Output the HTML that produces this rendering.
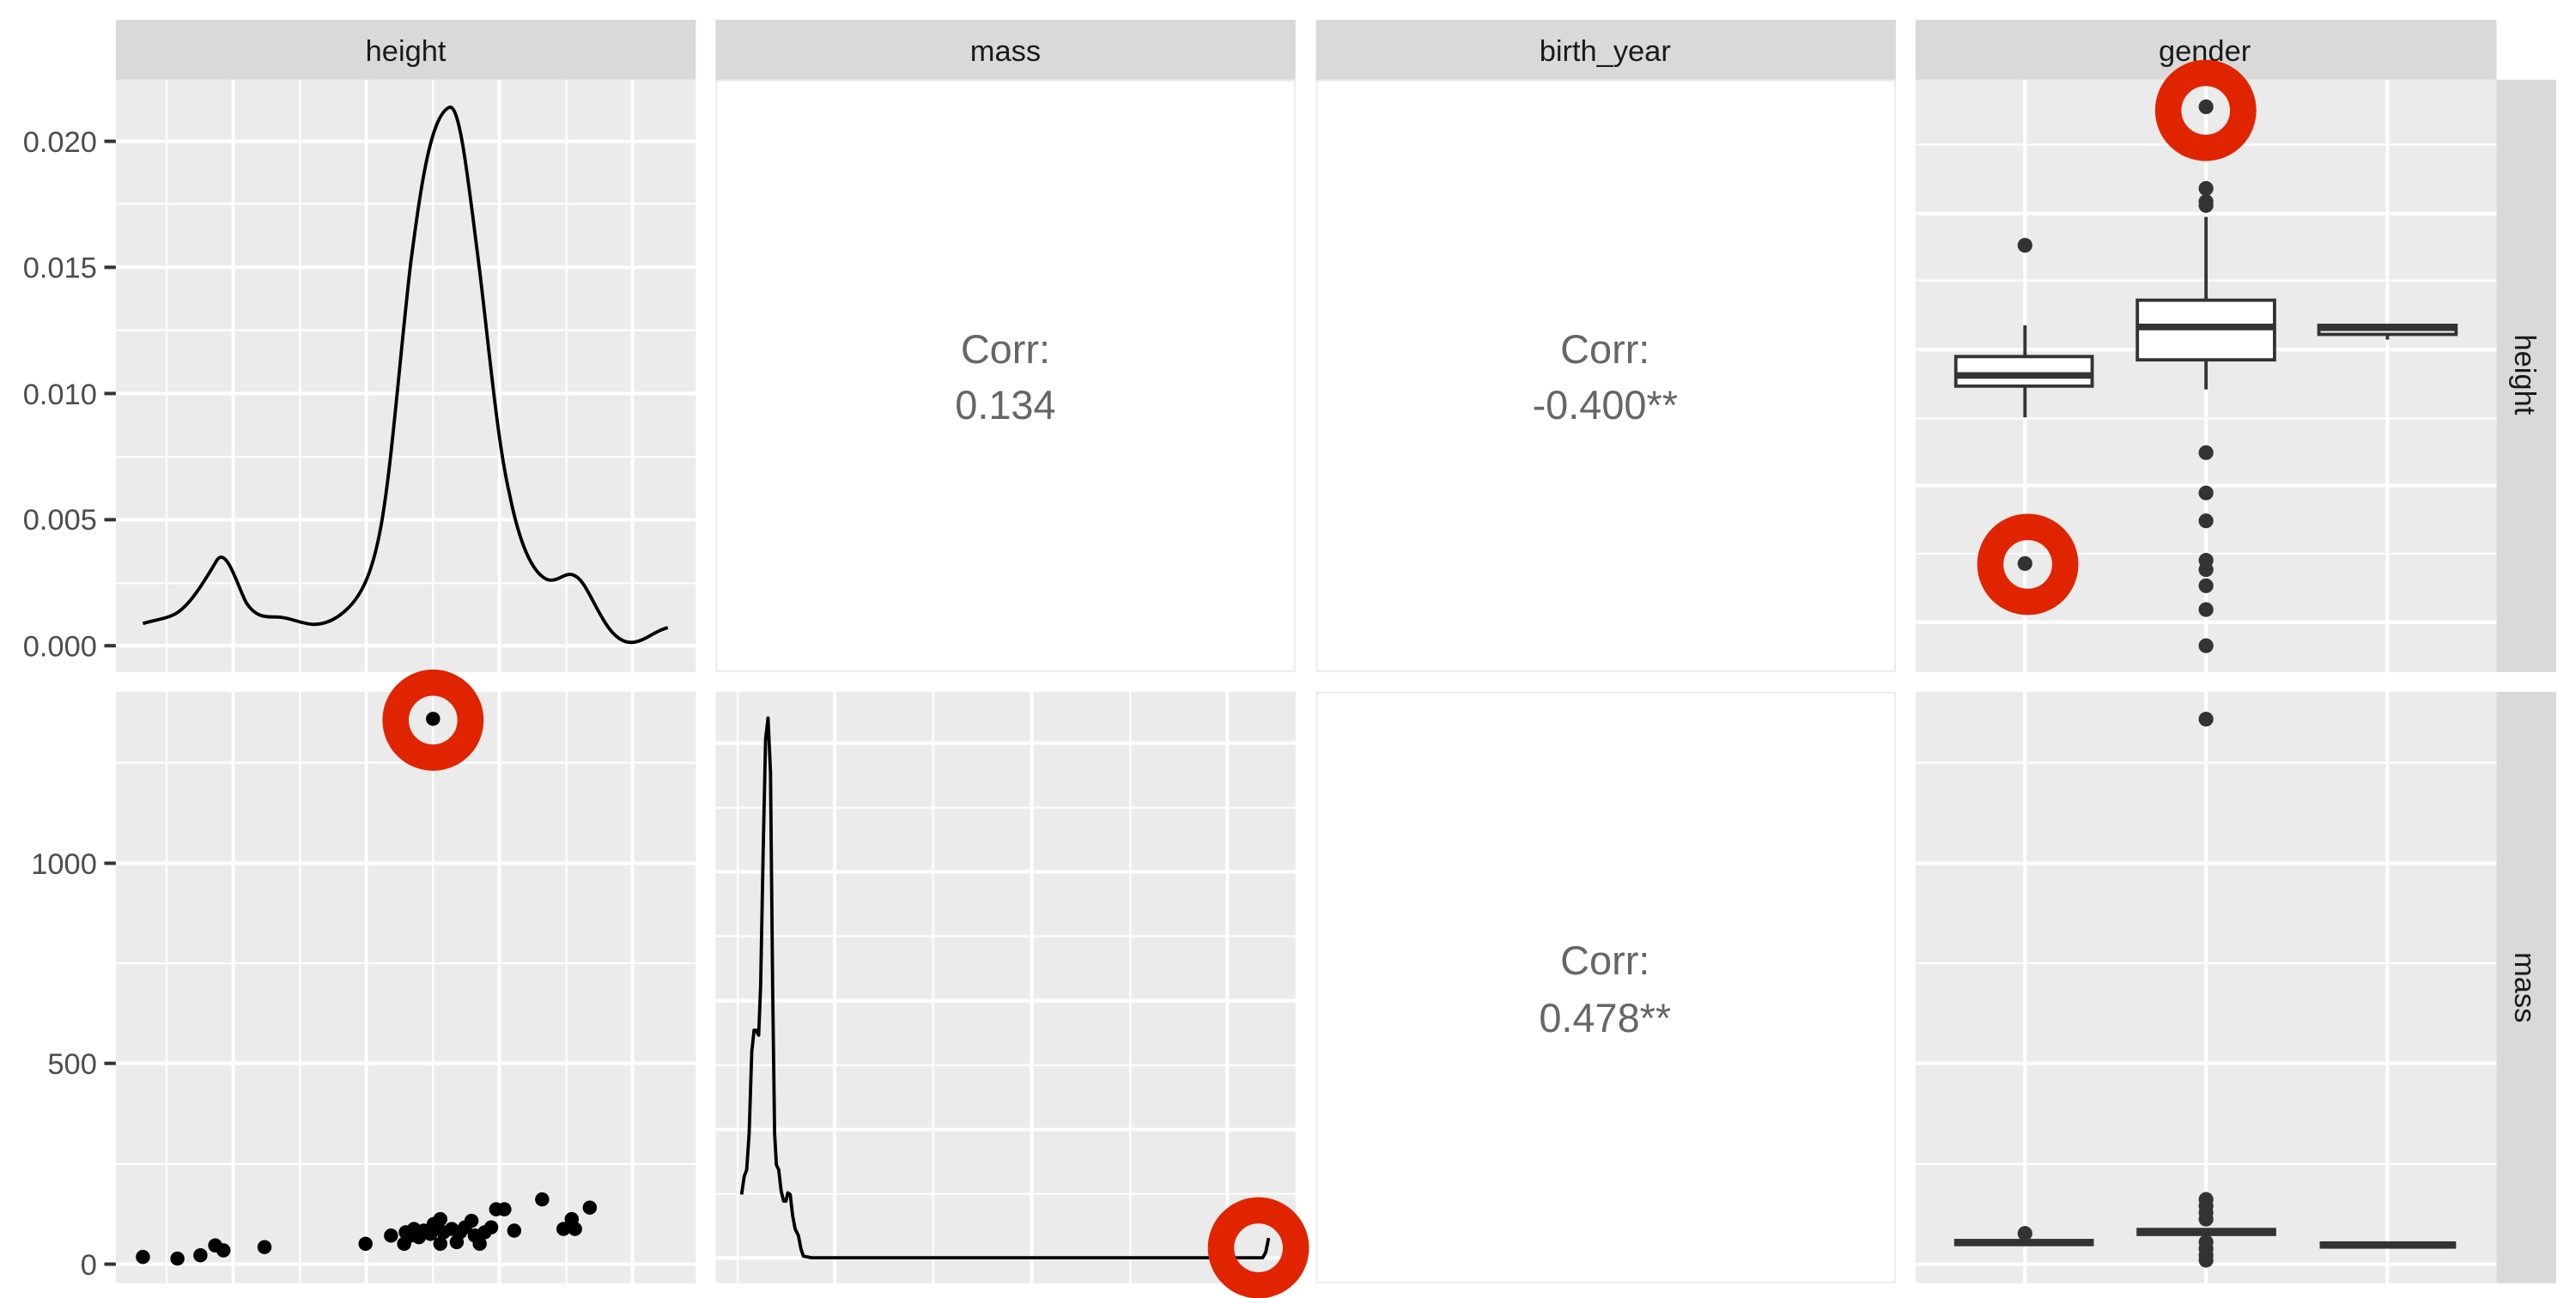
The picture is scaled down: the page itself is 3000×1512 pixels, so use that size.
<!DOCTYPE html>
<html><head><meta charset="utf-8"><style>
html,body{margin:0;padding:0;background:#fff;}
svg{display:block;}
text{font-family:"Liberation Sans",sans-serif;}
</style></head><body>
<svg width="3000" height="1512" viewBox="0 0 1568 790" preserveAspectRatio="none" xmlns="http://www.w3.org/2000/svg">
<rect width="1568" height="790" fill="#fff"/>
<g fill="#d9d9d9">
<rect x="70.5" y="12" width="353" height="36.5"/>
<rect x="435.6" y="12" width="353" height="36.5"/>
<rect x="801" y="12" width="353" height="36.5"/>
<rect x="1166" y="12" width="353.6" height="36.5"/>
<rect x="1519.6" y="48.5" width="36.4" height="360.5"/>
<rect x="1519.6" y="421" width="36.4" height="360"/>
</g>
<g font-size="18" fill="#1a1a1a" text-anchor="middle">
<text x="247" y="37">height</text>
<text x="612" y="37">mass</text>
<text x="977" y="37">birth_year</text>
<text x="1342" y="37">gender</text>
<text transform="translate(1531,228) rotate(90)">height</text>
<text transform="translate(1531,601) rotate(90)">mass</text>
</g>
<g fill="#ebebeb">
<rect x="70.5" y="48.5" width="353" height="360.5"/>
<rect x="1166" y="48.5" width="353.6" height="360.5"/>
<rect x="70.5" y="421" width="353" height="360"/>
<rect x="435.6" y="421" width="353" height="360"/>
<rect x="1166" y="421" width="353.6" height="360"/>
</g>
<g fill="#fff" stroke="#ebebeb" stroke-width="1">
<rect x="436.1" y="49" width="352" height="359.5"/>
<rect x="801.5" y="49" width="352" height="359.5"/>
<rect x="801.5" y="421.5" width="352" height="359"/>
</g>
<g stroke="#fff">
<g stroke-width="1.1">
<line x1="101.4" y1="48.5" x2="101.4" y2="409"/><line x1="182.5" y1="48.5" x2="182.5" y2="409"/>
<line x1="263.6" y1="48.5" x2="263.6" y2="409"/><line x1="344.8" y1="48.5" x2="344.8" y2="409"/>
<line x1="70.5" y1="124" x2="423.5" y2="124"/><line x1="70.5" y1="201" x2="423.5" y2="201"/>
<line x1="70.5" y1="278" x2="423.5" y2="278"/><line x1="70.5" y1="355" x2="423.5" y2="355"/>
<line x1="101.4" y1="421" x2="101.4" y2="781"/><line x1="182.5" y1="421" x2="182.5" y2="781"/>
<line x1="263.6" y1="421" x2="263.6" y2="781"/><line x1="344.8" y1="421" x2="344.8" y2="781"/>
<line x1="70.5" y1="464.2" x2="423.5" y2="464.2"/><line x1="70.5" y1="586.3" x2="423.5" y2="586.3"/><line x1="70.5" y1="708.4" x2="423.5" y2="708.4"/>
<line x1="449" y1="421" x2="449" y2="781"/><line x1="568" y1="421" x2="568" y2="781"/><line x1="688" y1="421" x2="688" y2="781"/>
<line x1="435.6" y1="491.6" x2="788.6" y2="491.6"/><line x1="435.6" y1="569.8" x2="788.6" y2="569.8"/>
<line x1="435.6" y1="648.3" x2="788.6" y2="648.3"/><line x1="435.6" y1="726.6" x2="788.6" y2="726.6"/>
<line x1="1166" y1="88" x2="1519.6" y2="88"/><line x1="1166" y1="170.6" x2="1519.6" y2="170.6"/>
<line x1="1166" y1="254.7" x2="1519.6" y2="254.7"/><line x1="1166" y1="337" x2="1519.6" y2="337"/>
<line x1="1166" y1="464.2" x2="1519.6" y2="464.2"/><line x1="1166" y1="586.3" x2="1519.6" y2="586.3"/><line x1="1166" y1="708.4" x2="1519.6" y2="708.4"/>
</g>
<g stroke-width="2.1">
<line x1="142" y1="48.5" x2="142" y2="409"/><line x1="223" y1="48.5" x2="223" y2="409"/>
<line x1="304" y1="48.5" x2="304" y2="409"/><line x1="385" y1="48.5" x2="385" y2="409"/>
<line x1="70.5" y1="86" x2="423.5" y2="86"/><line x1="70.5" y1="162.7" x2="423.5" y2="162.7"/>
<line x1="70.5" y1="239.5" x2="423.5" y2="239.5"/><line x1="70.5" y1="316.3" x2="423.5" y2="316.3"/>
<line x1="70.5" y1="393" x2="423.5" y2="393"/>
<line x1="142" y1="421" x2="142" y2="781"/><line x1="223" y1="421" x2="223" y2="781"/>
<line x1="304" y1="421" x2="304" y2="781"/><line x1="385" y1="421" x2="385" y2="781"/>
<line x1="70.5" y1="525.4" x2="423.5" y2="525.4"/><line x1="70.5" y1="647.2" x2="423.5" y2="647.2"/><line x1="70.5" y1="769.4" x2="423.5" y2="769.4"/>
<line x1="508" y1="421" x2="508" y2="781"/><line x1="628" y1="421" x2="628" y2="781"/><line x1="747" y1="421" x2="747" y2="781"/>
<line x1="435.6" y1="452.2" x2="788.6" y2="452.2"/><line x1="435.6" y1="530.6" x2="788.6" y2="530.6"/>
<line x1="435.6" y1="609" x2="788.6" y2="609"/><line x1="435.6" y1="687.4" x2="788.6" y2="687.4"/><line x1="435.6" y1="765.6" x2="788.6" y2="765.6"/>
<line x1="1232.6" y1="48.5" x2="1232.6" y2="409"/><line x1="1342.8" y1="48.5" x2="1342.8" y2="409"/><line x1="1453.2" y1="48.5" x2="1453.2" y2="409"/>
<line x1="1166" y1="130" x2="1519.6" y2="130"/><line x1="1166" y1="212.8" x2="1519.6" y2="212.8"/>
<line x1="1166" y1="295.5" x2="1519.6" y2="295.5"/><line x1="1166" y1="378.7" x2="1519.6" y2="378.7"/>
<line x1="1232.6" y1="421" x2="1232.6" y2="781"/><line x1="1342.8" y1="421" x2="1342.8" y2="781"/><line x1="1453.2" y1="421" x2="1453.2" y2="781"/>
<line x1="1166" y1="525.4" x2="1519.6" y2="525.4"/><line x1="1166" y1="647.2" x2="1519.6" y2="647.2"/><line x1="1166" y1="769.4" x2="1519.6" y2="769.4"/>
</g>
</g>
<g font-size="18" fill="#4d4d4d" text-anchor="end">
<text x="59" y="92.5">0.020</text><text x="59" y="169">0.015</text><text x="59" y="246">0.010</text>
<text x="59" y="322.5">0.005</text><text x="59" y="399.5">0.000</text>
<text x="59" y="531.8">1000</text><text x="59" y="653.6">500</text><text x="59" y="775.8">0</text>
</g>
<g stroke="#333" stroke-width="2.1">
<line x1="63.5" y1="86" x2="70.5" y2="86"/><line x1="63.5" y1="162.7" x2="70.5" y2="162.7"/>
<line x1="63.5" y1="239.5" x2="70.5" y2="239.5"/><line x1="63.5" y1="316.3" x2="70.5" y2="316.3"/>
<line x1="63.5" y1="393" x2="70.5" y2="393"/>
<line x1="63.5" y1="525.4" x2="70.5" y2="525.4"/><line x1="63.5" y1="647.2" x2="70.5" y2="647.2"/><line x1="63.5" y1="769.4" x2="70.5" y2="769.4"/>
</g>
<g font-size="24.5" fill="#666" text-anchor="middle">
<text x="612" y="221">Corr:</text><text x="612" y="255">0.134</text>
<text x="977" y="221">Corr:</text><text x="977" y="255">-0.400**</text>
<text x="977" y="593">Corr:</text><text x="977" y="628">0.478**</text>
</g>
<path fill="none" stroke="#000" stroke-width="2" stroke-linejoin="round" d="M87,379.5 C95,377 100,377 106,374 C114,370 122,358 132,341 C138,332 145,358 150,367 C156,376 162,375.5 168,375.5 C176,375.5 184,380 191,380 C198,380 205,377 212,370 C220,362 226,350 231,325 C238,290 243,220 250,160 C256,115 262,70 273.6,65.3 C280,63 285,110 292,165 C298,215 303,270 310,300 C316,330 324,350 334,353 C340,354 344,348 349,350 C355,352 359,363 366,375 C372,386 378,391 384,391 C392,391 398,384 406.5,382"/>
<path fill="none" stroke="#000" stroke-width="2" stroke-linejoin="round" d="M451.4,727 L453,716 L454.5,712 L456,690 L457.6,640 L459,627 L460.2,627 L461.8,630 L463,600 L464.5,520 L466,450 L467.5,437 L469,470 L470.3,600 L471.5,690 L472.6,709 L474,712 L475.5,725 L477,731 L478.4,731 L479.5,726 L481,727 L482.5,740 L484,748 L486,752 L487.5,760 L489,764.5 L494,765.5 L768.6,765.5 L770.5,762 L772.2,753.5"/>
<g fill="#000">
<circle cx="87" cy="765" r="4.3"/><circle cx="108" cy="766" r="4.3"/><circle cx="122" cy="764" r="4.3"/>
<circle cx="131" cy="758" r="4.3"/><circle cx="136" cy="761" r="4.3"/><circle cx="161" cy="759" r="4.3"/>
<circle cx="222.5" cy="757" r="4.3"/><circle cx="238" cy="752" r="4.3"/><circle cx="246" cy="757" r="4.3"/>
<circle cx="247" cy="750" r="4.3"/><circle cx="250" cy="752" r="4.3"/><circle cx="252" cy="748" r="4.3"/>
<circle cx="255" cy="753" r="4.3"/><circle cx="258" cy="749" r="4.3"/><circle cx="262" cy="751" r="4.3"/>
<circle cx="264" cy="745" r="4.3"/><circle cx="268" cy="742" r="4.3"/><circle cx="270" cy="750" r="4.3"/>
<circle cx="268" cy="757" r="4.3"/><circle cx="275" cy="748" r="4.3"/><circle cx="278" cy="756" r="4.3"/>
<circle cx="280" cy="750" r="4.3"/><circle cx="283" cy="747" r="4.3"/><circle cx="287" cy="743" r="4.3"/>
<circle cx="289" cy="752" r="4.3"/><circle cx="292" cy="757" r="4.3"/><circle cx="295" cy="750" r="4.3"/>
<circle cx="299" cy="747" r="4.3"/><circle cx="302" cy="736" r="4.3"/><circle cx="307" cy="736" r="4.3"/>
<circle cx="313" cy="749" r="4.3"/><circle cx="330" cy="730" r="4.3"/><circle cx="343" cy="748" r="4.3"/>
<circle cx="348" cy="742" r="4.3"/><circle cx="350" cy="748" r="4.3"/><circle cx="359" cy="735" r="4.3"/>
<circle cx="263.6" cy="437.5" r="4.3"/>
</g>
<g stroke="#333" stroke-width="2" fill="#fff">
<line x1="1232.6" y1="198" x2="1232.6" y2="254"/>
<rect x="1190.5" y="217" width="83" height="18"/>
<line x1="1342.8" y1="132" x2="1342.8" y2="237"/>
<rect x="1301" y="182.7" width="83.5" height="36.3"/>
<line x1="1453.2" y1="200" x2="1453.2" y2="206.7"/>
<rect x="1411.5" y="198" width="83.5" height="5.5"/>
</g>
<g stroke="#333" stroke-width="4">
<line x1="1190.5" y1="228.5" x2="1273.5" y2="228.5"/>
<line x1="1301" y1="199" x2="1384.5" y2="199"/>
<line x1="1411.5" y1="199.5" x2="1495" y2="199.5"/>
</g>
<g fill="#333">
<circle cx="1232.6" cy="149.3" r="4.5"/><circle cx="1232.6" cy="343" r="4.5"/>
<circle cx="1342.8" cy="65" r="4.5"/><circle cx="1342.8" cy="114.7" r="4.5"/><circle cx="1342.8" cy="122.7" r="4.5"/><circle cx="1342.8" cy="125" r="4.5"/>
<circle cx="1342.8" cy="275.5" r="4.5"/><circle cx="1342.8" cy="300" r="4.5"/><circle cx="1342.8" cy="317" r="4.5"/>
<circle cx="1342.8" cy="341" r="4.5"/><circle cx="1342.8" cy="346.7" r="4.5"/><circle cx="1342.8" cy="356.5" r="4.5"/>
<circle cx="1342.8" cy="371" r="4.5"/><circle cx="1342.8" cy="393" r="4.5"/>
<rect x="1189.5" y="754" width="85" height="4.5"/>
<rect x="1300.5" y="747.3" width="85" height="5"/>
<rect x="1412" y="755.5" width="83" height="4.5"/>
<circle cx="1232.6" cy="750.7" r="4.5"/>
<circle cx="1342.8" cy="437.7" r="4.5"/>
<circle cx="1342.8" cy="730" r="4.5"/><circle cx="1342.8" cy="734" r="4.5"/><circle cx="1342.8" cy="738" r="4.5"/><circle cx="1342.8" cy="742" r="4.5"/>
<circle cx="1342.8" cy="756" r="4.5"/><circle cx="1342.8" cy="760" r="4.5"/><circle cx="1342.8" cy="764" r="4.5"/><circle cx="1342.8" cy="767" r="4.5"/>
</g>
<g fill="none" stroke="#e12400" stroke-width="16">
<circle cx="1342.6" cy="67.2" r="22.8"/>
<circle cx="1234.3" cy="343.5" r="22.8"/>
<circle cx="263.6" cy="438.3" r="22.8"/>
<circle cx="766" cy="759.5" r="22.8"/>
</g>
</svg>
</body></html>
